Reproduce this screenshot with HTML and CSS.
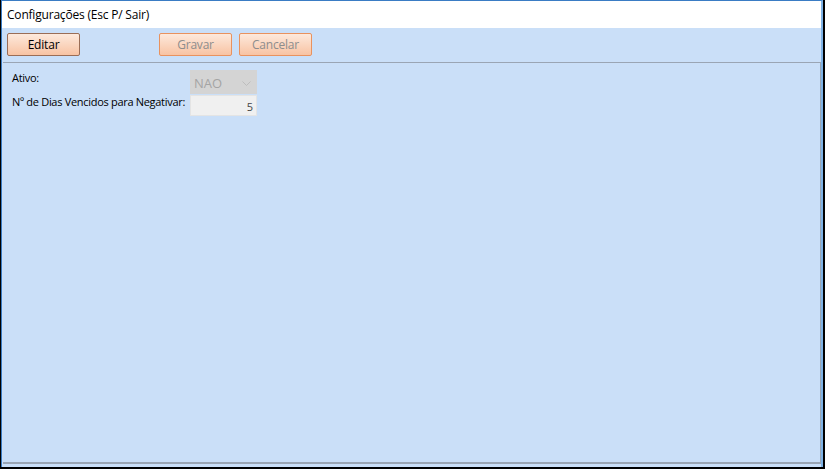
FILE: index.html
```html
<!DOCTYPE html>
<html lang="pt">
<head>
<meta charset="utf-8">
<title>Configurações</title>
<link rel="stylesheet" href="styles.css">
</head>
<body>
<div class="window">
  <div class="titlebar">Configurações (Esc P/ Sair)</div>
  <div class="toolbar">
    <button class="btn btn-active">Editar</button>
    <div class="toolbar-group">
      <button class="btn btn-disabled">Gravar</button>
      <button class="btn btn-disabled">Cancelar</button>
    </div>
  </div>
  <div class="panel">
    <div class="form-row row-ativo">
      <span class="label">Ativo:</span>
      <div class="select">
        <span>NAO</span>
        <svg class="chev" width="9" height="5" viewBox="0 0 9 5"><path d="M0.5 0.5 L4.5 4.5 L8.5 0.5" fill="none" stroke="#bdbdbd" stroke-width="1"/></svg>
      </div>
    </div>
    <div class="form-row row-dias">
      <span class="label">Nº de Dias Vencidos para Negativar:</span>
      <div class="input">5</div>
    </div>
  </div>
</div>
</body>
</html>
```

FILE: styles.css
```css
* { box-sizing: border-box; }
html, body {
  margin: 0;
  padding: 0;
  background: #000;
  width: 825px;
  height: 469px;
  overflow: hidden;
}
body {
  font-family: "Open Sans", "Noto Sans", sans-serif;
  font-size: 12px;
  color: #000;
}
.window {
  width: 822px;
  height: 467px;
  margin-left: 1px;
  border-left: 1px solid #3a7cc4;
  border-right: 2px solid #7fb3e6;
  border-top: 1px solid #3a7cc4;
  background: #cadff8;
  display: flex;
  flex-direction: column;
}
.titlebar {
  height: 27px;
  background: #fff;
  padding-left: 5px;
  line-height: 27px;
  font-size: 12px;
  letter-spacing: -0.2px;
  white-space: nowrap;
}
.toolbar {
  height: 34px;
  display: flex;
  align-items: flex-start;
  padding-top: 5px;
  padding-left: 5px;
}
.toolbar-group {
  display: flex;
  gap: 7px;
  margin-left: 79px;
}
.btn {
  width: 73px;
  height: 23px;
  border-radius: 2px;
  font-family: inherit;
  font-size: 12px;
  letter-spacing: -0.2px;
  padding: 0;
  background: linear-gradient(#fde9dc, #f8c3a3);
  cursor: default;
}
.btn-active {
  border: 1px solid #9a6d56;
  color: #000;
}
.btn-disabled {
  border: 1px solid #e9925e;
  color: #8d8d8d;
}
.panel {
  flex: 1;
  margin: 0 0 3px 1px;
  width: 818px;
  border-top: 1px solid #9aa5b4;
  border-right: 1px solid #9aa5b4;
  border-bottom: 2px solid #9aa5b4;
  padding: 7px 0 0 9px;
  position: relative;
}
.form-row {
  display: flex;
  align-items: flex-start;
}
.label {
  width: 178px;
  font-size: 11px;
  line-height: 15px;
  letter-spacing: -0.3px;
  white-space: nowrap;
}
.select {
  width: 67px;
  height: 24px;
  background: #d4d4d4;
  color: #a4a4a4;
  font-size: 13px;
  display: flex;
  align-items: center;
  justify-content: space-between;
  padding: 2px 6px 0 4px;
}
.input {
  width: 67px;
  height: 21px;
  margin-top: 1px;
  background: #f0f0f0;
  border: 1px solid #e4e4e4;
  text-align: right;
  padding: 3px 3px 0 0;
  color: #444;
  font-size: 11px;
}
```
